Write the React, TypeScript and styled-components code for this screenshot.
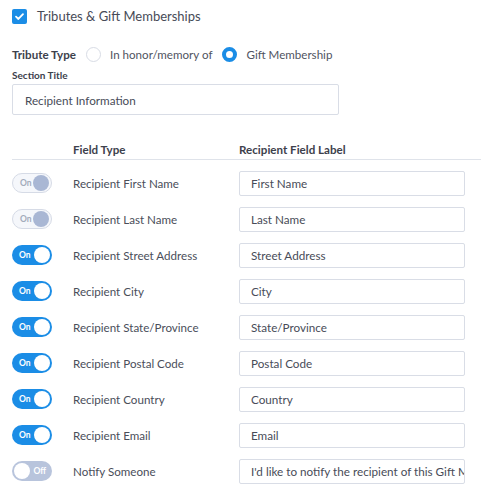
import React from "react";
import styled, { createGlobalStyle } from "styled-components";

const GlobalStyle = createGlobalStyle`
  body {
    margin: 0;
    background: #ffffff;
    font-family: Lato, "Open Sans", sans-serif;
    color: #474b57;
  }
`;

const Page = styled.div`
  padding: 7px 0 0 12px;
`;

const SectionHeader = styled.label`
  display: flex;
  align-items: center;
  gap: 10px;
  font-size: 13px;
  color: #474b57;
  height: 18px;
`;

const CheckBox = styled.span`
  display: inline-flex;
  align-items: center;
  justify-content: center;
  width: 15px;
  height: 15px;
  border-radius: 2px;
  background: #1b8de6;
`;

const TypeRow = styled.div`
  display: flex;
  align-items: center;
  margin-top: 20px;
  height: 18px;
  font-size: 11.6px;
`;

const BoldLabel = styled.span`
  font-weight: 700;
  color: #3d414c;
  margin-right: 10px;
`;

const Radio = styled.span<{ $checked?: boolean }>`
  box-sizing: border-box;
  width: 15px;
  height: 15px;
  border-radius: 50%;
  border: ${({ $checked }) => ($checked ? "4px solid #1b8de6" : "1px solid #d8dce5")};
  background: #fff;
  margin-right: 9px;
`;

const RadioText = styled.span`
  margin-right: 10px;
  color: #50545f;
`;

const SmallTitle = styled.div`
  margin-top: 6px;
  font-size: 10px;
  line-height: 12px;
  font-weight: 700;
  color: #3d414c;
`;

const TextInput = styled.div<{ $width: number; $height: number }>`
  box-sizing: border-box;
  display: flex;
  align-items: center;
  width: ${({ $width }) => $width}px;
  height: ${({ $height }) => $height}px;
  border: 1px solid #d9dde6;
  border-radius: 2px;
  padding-left: 11px;
  font-size: 11.7px;
  color: #484c58;
  white-space: nowrap;
  overflow: hidden;
`;

const TitleInput = styled(TextInput)`
  margin-top: 3px;
  padding-left: 12px;
`;

const Table = styled.div`
  margin-top: 25px;
  display: grid;
  grid-template-columns: 61px 166px 226px 1fr;
`;

const HeadCell = styled.div`
  font-size: 11.6px;
  font-weight: 700;
  color: #3d414c;
  height: 19px;
  line-height: 19px;
  border-bottom: 1px solid #dfe3ea;
`;

const Cell = styled.div<{ $first?: boolean }>`
  display: flex;
  align-items: center;
  height: 36px;
  margin-top: ${({ $first }) => ($first ? "5px" : "0")};
  font-size: 11.6px;
  color: #4a4e5a;
`;

type ToggleState = "on" | "locked" | "off";

const ToggleTrack = styled.span<{ $state: ToggleState }>`
  position: relative;
  box-sizing: border-box;
  display: inline-block;
  width: 40px;
  height: 20px;
  border-radius: 10px;
  background: ${({ $state }) =>
    $state === "on" ? "#1b8de6" : $state === "off" ? "#b8c4dc" : "#f5f7fb"};
  border: ${({ $state }) => ($state === "locked" ? "1px solid #d6dbe6" : "none")};
`;

const ToggleKnob = styled.span<{ $state: ToggleState }>`
  position: absolute;
  top: ${({ $state }) => ($state === "locked" ? "1px" : "2px")};
  ${({ $state }) => ($state === "off" ? "left: 2px;" : "right: 2px;")}
  width: 16px;
  height: 16px;
  border-radius: 50%;
  background: ${({ $state }) => ($state === "locked" ? "#a9b7d4" : "#ffffff")};
`;

const ToggleText = styled.span<{ $state: ToggleState }>`
  position: absolute;
  top: 0;
  bottom: 0;
  display: flex;
  align-items: center;
  ${({ $state }) => ($state === "off" ? "right: 6px;" : "left: 7px;")}
  font-size: 8.5px;
  font-weight: 700;
  color: ${({ $state }) => ($state === "locked" ? "#a3abbb" : "#ffffff")};
`;

const Toggle: React.FC<{ state: ToggleState }> = ({ state }) => (
  <ToggleTrack $state={state}>
    <ToggleText $state={state}>{state === "off" ? "Off" : "On"}</ToggleText>
    <ToggleKnob $state={state} />
  </ToggleTrack>
);

const fields: { state: ToggleState; type: string; label: string }[] = [
  { state: "locked", type: "Recipient First Name", label: "First Name" },
  { state: "locked", type: "Recipient Last Name", label: "Last Name" },
  { state: "on", type: "Recipient Street Address", label: "Street Address" },
  { state: "on", type: "Recipient City", label: "City" },
  { state: "on", type: "Recipient State/Province", label: "State/Province" },
  { state: "on", type: "Recipient Postal Code", label: "Postal Code" },
  { state: "on", type: "Recipient Country", label: "Country" },
  { state: "on", type: "Recipient Email", label: "Email" },
  { state: "off", type: "Notify Someone", label: "I'd like to notify the recipient of this Gift Membership" },
];

export default function App() {
  return (
    <>
      <GlobalStyle />
      <Page>
        <SectionHeader>
          <CheckBox>
            <svg width="11" height="11" viewBox="0 0 12 12">
              <path d="M2.2 6.2 L4.8 8.7 L9.8 3.4" fill="none" stroke="#fff" strokeWidth="2" strokeLinecap="round" strokeLinejoin="round" />
            </svg>
          </CheckBox>
          Tributes &amp; Gift Memberships
        </SectionHeader>
        <TypeRow>
          <BoldLabel>Tribute Type</BoldLabel>
          <Radio />
          <RadioText>In honor/memory of</RadioText>
          <Radio $checked />
          <RadioText>Gift Membership</RadioText>
        </TypeRow>
        <SmallTitle>Section Title</SmallTitle>
        <TitleInput $width={327} $height={31}>Recipient Information</TitleInput>
        <Table>
          <HeadCell />
          <HeadCell>Field Type</HeadCell>
          <HeadCell>Recipient Field Label</HeadCell>
          <HeadCell />
          {fields.map((f, i) => (
            <React.Fragment key={f.type}>
              <Cell $first={i === 0}>
                <Toggle state={f.state} />
              </Cell>
              <Cell $first={i === 0}>{f.type}</Cell>
              <Cell $first={i === 0}>
                <TextInput $width={226} $height={25}>{f.label}</TextInput>
              </Cell>
              <Cell $first={i === 0} />
            </React.Fragment>
          ))}
        </Table>
      </Page>
    </>
  );
}
